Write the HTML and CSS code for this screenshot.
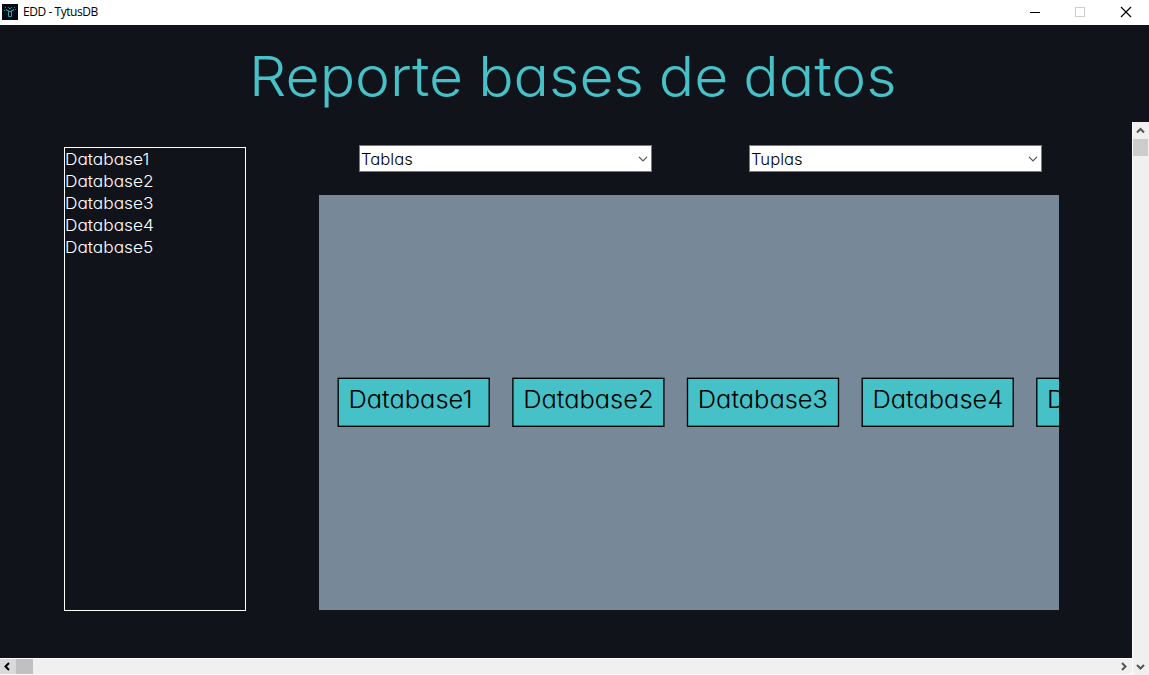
FILE: index.html
```html
<!DOCTYPE html>
<html lang="es">
<head>
<meta charset="utf-8">
<title>EDD - TytusDB</title>
<link rel="stylesheet" href="styles.css">
</head>
<body>
<div class="titlebar">
  <svg class="app-icon" width="16" height="16" viewBox="0 0 16 16"><rect width="16" height="16" fill="#020b14"/><path d="M3 3h1v1H3zM6 3h1v1H6zM9 3h1v1H9zM12 3h1v1h-1zM4 5h1v1H4zM11 5h1v1h-1zM7 4h2v1H7zM2 6h1v1H2zM13 5h1v1h-1z" fill="#2a8b92"/><path d="M4.500 6.500h2v2M11.500 6.500h-2v2M6.500 8v4.500h3V8M7 7.500h2" fill="none" stroke="#2aa5ab"/></svg>
  <span class="caption">EDD - TytusDB</span>
  <svg class="win-controls" width="119" height="25" viewBox="0 0 119 25"><path d="M0 12.500h10" stroke="#000"/><rect x="45.500" y="7.500" width="9" height="9" fill="none" stroke="#ccc"/><path d="M91 7l10 10M101 7L91 17" stroke="#000" stroke-width="1.200"/></svg>
</div>
<header class="heading"><h1>Reporte bases de datos</h1></header>
<div class="viewport">
  <main class="content">
    <ul class="db-list">
      <li>Database1</li><li>Database2</li><li>Database3</li><li>Database4</li><li>Database5</li>
    </ul>
    <section class="report">
      <div class="filters">
        <div class="combo"><span>Tablas</span><svg width="10" height="6" viewBox="0 0 10 6"><path d="M1 .8l4 4 4-4" fill="none" stroke="#555" stroke-width="1.200"/></svg></div>
        <div class="combo"><span>Tuplas</span><svg width="10" height="6" viewBox="0 0 10 6"><path d="M1 .8l4 4 4-4" fill="none" stroke="#555" stroke-width="1.200"/></svg></div>
      </div>
      <svg class="graph" width="740" height="415" viewBox="0 0 740 415">
        <g transform="translate(19.200 183.300)"><rect width="151" height="48"/><text transform="translate(10.300 29.700) scale(1.060 1)">Database1</text></g>
        <g transform="translate(193.900 183.300)"><rect width="151" height="48"/><text transform="translate(10.300 29.700) scale(1.060 1)">Database2</text></g>
        <g transform="translate(368.500 183.300)"><rect width="151" height="48"/><text transform="translate(10.300 29.700) scale(1.060 1)">Database3</text></g>
        <g transform="translate(543.200 183.300)"><rect width="151" height="48"/><text transform="translate(10.300 29.700) scale(1.060 1)">Database4</text></g>
        <g transform="translate(717.800 183.300)"><rect width="151" height="48"/><text transform="translate(10.300 29.700) scale(1.060 1)">D</text></g>
      </svg>
    </section>
  </main>
  <div class="scroll-v">
    <svg width="16" height="17" viewBox="0 0 16 17"><path d="M4 10.500l3.500-3.500 3.500 3.500" fill="none" stroke="#555" stroke-width="2"/></svg>
    <div class="thumb-v"></div>
    <svg class="down" width="16" height="17" viewBox="0 0 16 17"><path d="M4 7l3.500 3.500L11 7" fill="none" stroke="#555" stroke-width="2"/></svg>
  </div>
  <div class="scroll-h">
    <svg class="pressed" width="16" height="15" viewBox="0 0 16 15"><path d="M9 4L5.500 7.500 9 11" fill="none" stroke="#000" stroke-width="2"/></svg>
    <div class="thumb-h"></div>
    <svg class="right" width="16" height="15" viewBox="0 0 16 15"><path d="M6 4l3.500 3.500L6 11" fill="none" stroke="#555" stroke-width="2"/></svg>
  </div>
</div>
</body>
</html>
```
FILE: styles.css
```css
* { box-sizing: border-box; }
body {
  margin: 0;
  width: 1149px;
  height: 675px;
  overflow: hidden;
  display: flex;
  flex-direction: column;
  background: #10131a;
  font-family: Inter, "Liberation Sans", sans-serif;
  font-feature-settings: "cv11" 1;
}
svg { display: block; flex: none; }
.titlebar {
  height: 25px;
  display: flex;
  align-items: center;
  background: #fff;
  padding-left: 2px;
}
.app-icon { margin-bottom: 1px; }
.caption {
  margin-left: 5px;
  font: 12px/24px "Open Sans", "Noto Sans", sans-serif;
  letter-spacing: -0.45px;
  padding-bottom: 1px;
  color: #000;
}
.win-controls { margin-left: auto; }
.heading { height: 97px; padding: 14px 0 0 249px; }
h1 {
  margin: 0;
  width: max-content;
  font-size: 55px;
  line-height: 74px;
  font-weight: 300;
  word-spacing: -1.5px;
  white-space: nowrap;
  color: #46c1c7;
  transform: scaleX(1.07);
  transform-origin: 0 0;
}
.viewport {
  height: 553px;
  display: grid;
  grid-template-columns: 1132px 17px;
  grid-template-rows: 536px 17px;
}
.content { display: flex; padding-left: 64px; }
.db-list {
  list-style: none;
  margin: 25px 0 0;
  padding: 0;
  width: 182px;
  height: 464px;
  border: 1px solid #fff;
  color: #fff;
  font-size: 16px;
  line-height: 22px;
  font-weight: 300;
}
.db-list li {
  width: max-content;
  transform: scaleX(1.08);
  transform-origin: 0 0;
}
.report { margin-left: 73px; padding-top: 23px; }
.filters { display: flex; gap: 97px; padding-left: 40px; margin-bottom: 23px; }
.combo {
  width: 293px;
  height: 27px;
  display: flex;
  align-items: center;
  justify-content: space-between;
  padding: 1px 3px 0 1px;
  background: #fff;
  border: 1px solid #7a7a7a;
  font-size: 16px;
  font-weight: 300;
  color: #000;
}
.combo span { transform: scaleX(1.04); transform-origin: 0 0; }
.graph { background: #778899; }
.graph rect { fill: #46c1c7; stroke: #000; stroke-width: 1.33px; }
.graph text { font-size: 24px; font-weight: 300; fill: #000; }
.scroll-v {
  grid-column: 2;
  grid-row: 1 / 3;
  display: flex;
  flex-direction: column;
  background: #f0f0f0;
  border-left: 1px solid #fff;
}
.thumb-v { height: 17px; width: 15px; background: #cdcdcd; }
.down { margin-top: auto; }
.scroll-h {
  grid-column: 1;
  grid-row: 2;
  display: flex;
  background: #f0f0f0;
  border-top: 1px solid #fff;
  border-bottom: 1px solid #fff;
}
.pressed { background: #dadada; }
.thumb-h { width: 17px; height: 15px; background: #c0c0c0; }
.right { margin-left: auto; }
```
